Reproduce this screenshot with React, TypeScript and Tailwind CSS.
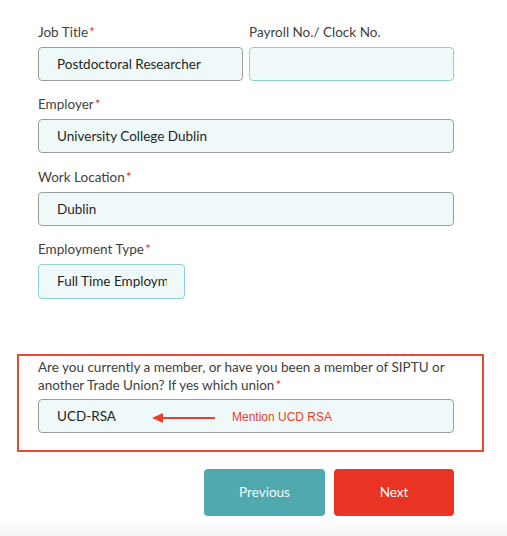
import React from "react";

const Star = () => (
  <span className="text-[#d8453a] ml-[1px] text-[14px] leading-[0]">*</span>
);

const Label = ({ text, req = true }: { text: string; req?: boolean }) => (
  <div className="text-[13.5px] leading-[17px] h-[17px] text-[#414141] mb-[6px]">
    {text}
    {req && <Star />}
  </div>
);

const Input = ({ value, cls }: { value?: string; cls: string }) => (
  <div
    className={`h-[34px] rounded-[4px] border bg-[#f0f9fa] pl-[18px] flex items-center text-[13.5px] text-[#1f1f1f] overflow-hidden whitespace-nowrap ${cls}`}
  >
    {value}
  </div>
);

export default function App() {
  return (
    <div
      className="w-[507px] h-[536px] bg-white relative overflow-hidden"
      style={{ fontFamily: 'Lato, "Noto Sans", sans-serif' }}
    >
      <div className="pt-[24px] pl-[38px] pr-[53px] flex flex-col">
        <div className="flex gap-[6px]">
          <div className="w-[205px]">
            <Label text="Job Title" />
            <Input value="Postdoctoral Researcher" cls="border-[#9a9e9f]" />
          </div>
          <div className="w-[205px]">
            <Label text="Payroll No./ Clock No." req={false} />
            <Input cls="border-[#8ecfd2]" />
          </div>
        </div>
        <div className="mt-[15px]">
          <Label text="Employer" />
          <Input value="University College Dublin" cls="border-[#9a9e9f]" />
        </div>
        <div className="mt-[16px]">
          <Label text="Work Location" />
          <Input value="Dublin" cls="border-[#9a9e9f]" />
        </div>
        <div className="mt-[15px] w-[147px]">
          <Label text="Employment Type" />
          <div className="h-[35px] rounded-[4px] border border-[#8ecfd2] bg-[#f0f9fa] pl-[18px] pr-[17px] flex items-center text-[13.5px] text-[#1f1f1f]">
            <span className="block overflow-hidden whitespace-nowrap w-full">
              Full Time Employment
            </span>
          </div>
        </div>
      </div>

      <div className="ml-[17px] mt-[55px] w-[467px] h-[98px] border-2 border-[#ea4a35] pl-[19px] pr-[20px] pt-[2px]">
        <div className="text-[13.5px] leading-[18px] h-[36px] text-[#414141]">
          Are you currently a member, or have you been a member of SIPTU or
          another Trade Union? If yes which union
          <Star />
        </div>
        <div className="mt-[5px] mr-[8px] relative h-[34px] rounded-[4px] border border-[#9a9e9f] bg-[#f0f9fa] pl-[18px] flex items-center text-[13.5px] text-[#1f1f1f]">
          UCD-RSA
          <svg
            className="absolute left-[113px] top-[13px]"
            width="64"
            height="10"
            viewBox="0 0 64 10"
          >
            <line x1="8" y1="5" x2="63" y2="5" stroke="#e8402a" strokeWidth="2" />
            <polygon points="0,5 11,0 11,10" fill="#e8402a" />
          </svg>
          <span
            className="absolute left-[193px] top-[10px] text-[12px] leading-[14px] text-[#e8402a]"
            style={{ fontFamily: '"Liberation Sans", Arial, sans-serif' }}
          >
            Mention UCD RSA
          </span>
        </div>
      </div>

      <div className="flex gap-[9px] mt-[17px] pl-[204px]">
        <button className="w-[121px] h-[47px] rounded-[4px] bg-[#4fa9ae] text-[#f4fbfb] text-[13.5px]">
          Previous
        </button>
        <button className="w-[120px] h-[47px] rounded-[4px] bg-[#e93424] text-white text-[13.5px]">
          Next
        </button>
      </div>

      <div className="absolute left-0 right-0 bottom-0 h-[17px] bg-gradient-to-b from-white to-[#f6f6f6]" />
    </div>
  );
}
